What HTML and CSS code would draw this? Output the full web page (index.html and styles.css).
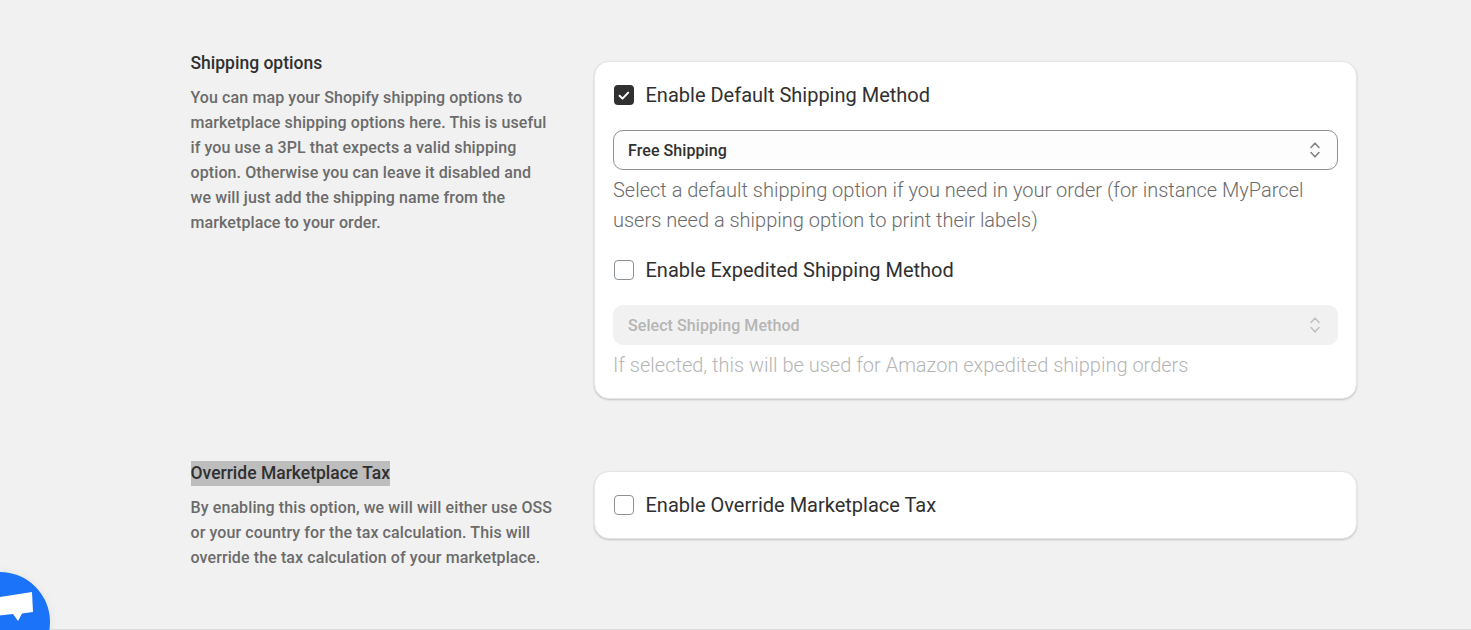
FILE: index.html
```html
<!DOCTYPE html>
<html lang="en">
<head>
<meta charset="utf-8">
<title>Shipping options</title>
<link rel="stylesheet" href="styles.css">
</head>
<body>
<main class="page">
  <section class="section">
    <div class="intro">
      <h2 class="intro-title">Shipping options</h2>
      <p class="intro-text">You can map your Shopify shipping options to marketplace shipping options here. This is useful if you use a 3PL that expects a valid shipping option. Otherwise you can leave it disabled and we will just add the shipping name from the marketplace to your order.</p>
    </div>
    <div class="card">
      <div class="check-row">
        <span class="check check-on">
          <svg viewBox="0 0 20 20" width="20" height="20"><path d="M5.6 10.7L8.5 13.6L14.2 7.6" fill="none" stroke="#fff" stroke-width="2" stroke-linecap="round" stroke-linejoin="round"/></svg>
        </span>
        <span class="check-label">Enable Default Shipping Method</span>
      </div>
      <div class="select">
        <span>Free Shipping</span>
        <svg class="updown" viewBox="0 0 12 20" width="12" height="20"><path d="M2 7.5L6 3.2L10 7.5M2 12.5L6 16.8L10 12.5" fill="none" stroke="#808080" stroke-width="1.6" stroke-linecap="round" stroke-linejoin="round"/></svg>
      </div>
      <p class="help">Select a default shipping option if you need in your order (for instance MyParcel users need a shipping option to print their labels)</p>
      <div class="check-row check-row-next">
        <span class="check"></span>
        <span class="check-label">Enable Expedited Shipping Method</span>
      </div>
      <div class="select select-off">
        <span>Select Shipping Method</span>
        <svg class="updown" viewBox="0 0 12 20" width="12" height="20"><path d="M2 7.5L6 3.2L10 7.5M2 12.5L6 16.8L10 12.5" fill="none" stroke="#c0c0c0" stroke-width="1.6" stroke-linecap="round" stroke-linejoin="round"/></svg>
      </div>
      <p class="help help-off">If selected, this will be used for Amazon expedited shipping orders</p>
    </div>
  </section>
  <section class="section section-next">
    <div class="intro">
      <h2 class="intro-title"><span class="selected">Override Marketplace Tax</span></h2>
      <p class="intro-text">By enabling this option, we will will either use OSS or your country for the tax calculation. This will override the tax calculation of your marketplace.</p>
    </div>
    <div class="card card-single">
      <div class="check-row">
        <span class="check"></span>
        <span class="check-label">Enable Override Marketplace Tax</span>
      </div>
    </div>
  </section>
</main>
<div class="chat">
  <svg viewBox="-5 0 40 30" width="40" height="30"><path d="M-5 5.7L32 0L33 20L22 21.5L18 29L13 22L-5 24Z" fill="#fff"/></svg>
</div>
</body>
</html>
```
FILE: styles.css
```css
* { box-sizing: border-box; }
html, body { margin: 0; height: 100%; }
body {
  background: #f1f1f1;
  font-family: Roboto, "Liberation Sans", sans-serif;
  color: #303030;
  overflow: hidden;
  border-bottom: 1px solid #dcdcdc;
}
.page { padding: 50px 114px 0 190.5px; }
.section { display: flex; align-items: flex-start; }
.section-next { margin-top: 61px; }
.intro { width: 403.5px; flex: none; padding-right: 40.5px; }
.intro-title {
  margin: 0;
  padding-top: .5px;
  height: 25px;
  font-size: 17.5px;
  line-height: 25px;
  font-weight: 500;
}
.selected { display: inline-block; background: #bdbdbd; }
.intro-text {
  margin: 10px 0 0;
  font-size: 16px;
  letter-spacing: .1px;
  line-height: 25px;
  font-weight: 500;
  color: #6b6b6b;
}
.card {
  flex: 1;
  margin-top: 11px;
  padding: 19px 18px 18px;
  background: #fff;
  border: 1px solid #e6e6e6;
  border-radius: 15px;
  box-shadow: 0 1px 2px rgba(0, 0, 0, .2);
}
.card-single { padding-bottom: 19px; }
.check-row { display: flex; align-items: center; gap: 11.5px; height: 28px; margin-left: 1px; }
.check-row-next { margin-top: 21px; }
.check {
  width: 20px;
  height: 20px;
  flex: none;
  border: 1px solid #8c9196;
  border-radius: 4px;
  background: #fff;
}
.check-on { border: 0; background: #303030; display: block; }
.check-on svg { display: block; }
.check-label { font-size: 20px; line-height: 28px; }
.select {
  display: flex;
  align-items: center;
  justify-content: space-between;
  height: 40px;
  margin-top: 21px;
  padding: 0 16px 0 14px;
  border: 1px solid #8c9196;
  border-radius: 10px;
  background: #fdfdfd;
  font-size: 16px;
  letter-spacing: .07px;
  font-weight: 500;
}
.select-off {
  border-color: #f1f1f1;
  background: #f1f1f1;
  color: #b5b5b5;
}
.help {
  margin: 5px 0 0;
  font-size: 20px;
  line-height: 30px;
  font-weight: 300;
  color: #6b6b6b;
}
.help-off { color: #b5b5b5; }
.chat {
  position: fixed;
  left: -50px;
  top: 572px;
  width: 100px;
  height: 100px;
  border-radius: 50%;
  background: #1a73f8;
  box-shadow: 0 0 10px rgba(0, 0, 0, .06);
}
.chat svg { position: absolute; left: 45px; top: 20px; }
```
